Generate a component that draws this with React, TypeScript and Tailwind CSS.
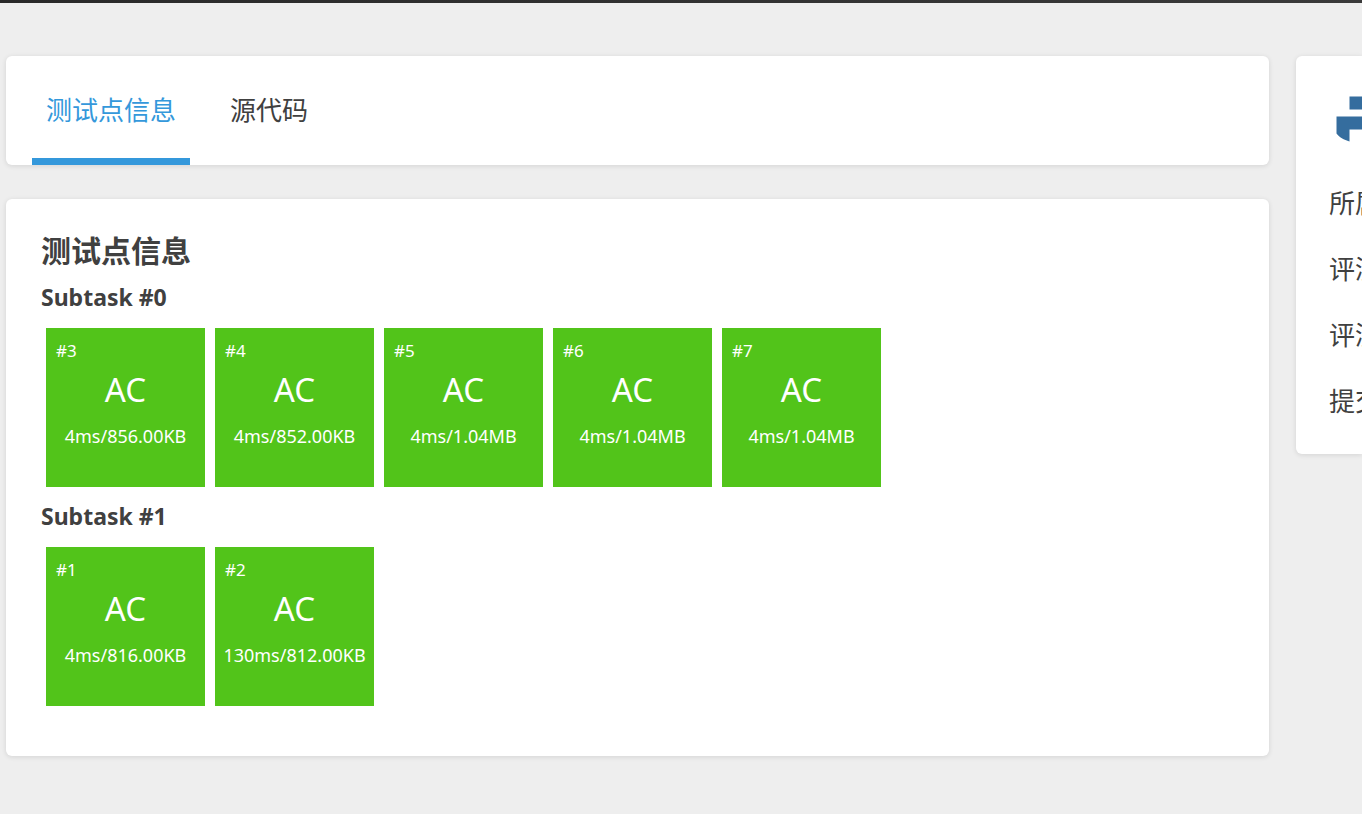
import React, { useState } from 'react';

const tabs = ['测试点信息', '源代码'];

const subtasks = [
  {
    id: 0,
    cases: [
      { id: 3, status: 'AC', usage: '4ms/856.00KB' },
      { id: 4, status: 'AC', usage: '4ms/852.00KB' },
      { id: 5, status: 'AC', usage: '4ms/1.04MB' },
      { id: 6, status: 'AC', usage: '4ms/1.04MB' },
      { id: 7, status: 'AC', usage: '4ms/1.04MB' }
    ]
  },
  {
    id: 1,
    cases: [
      { id: 1, status: 'AC', usage: '4ms/816.00KB' },
      { id: 2, status: 'AC', usage: '130ms/812.00KB' }
    ]
  }
];

const infoLabels = ['所属', '评测', '评测', '提交'];

type Case = { id: number; status: string; usage: string };

const TestCase = ({ item }: { item: Case }) => (
  <div className="size-[159px] bg-[#52c41a] pt-[10px] text-white whitespace-nowrap">
    <div className="px-[10px] text-[17px] leading-[26px]">#{item.id}</div>
    <div className="text-center text-[33px] leading-[52px]">{item.status}</div>
    <div className="text-center text-[18px] leading-[40px]">{item.usage}</div>
  </div>
);

const Logo = () => (
  <svg className="h-[46px] w-[54px] max-w-none" viewBox="0 0 54 46" fill="#356d9e" aria-hidden="true">
    <path d="M13.5 0.5H54V13.5H13.5Z" />
    <path d="M0.5 20.5H54V33.5H13.5V45.5C8 44 3 41 0.5 37.5Z" />
  </svg>
);

const App = () => {
  const [activeTab, setActiveTab] = useState(0);

  return (
    <div className="min-h-screen bg-[#eeeeee] text-[#404040] font-['Noto_Sans','Noto_Sans_CJK_SC',sans-serif]">
      <div className="h-[3px] bg-linear-to-r from-[#292929] to-[#3a3a3a]" />
      <div className="flex items-start gap-[27px] pl-[6px] pt-[53px]">
        <main className="flex min-w-0 flex-1 flex-col gap-[34px]">
          <nav className="flex gap-[26px] rounded-md bg-white px-[26px] shadow-[0_1px_5px_rgba(26,26,26,0.12)]">
            {tabs.map((tab, index) => (
              <button
                key={tab}
                onClick={() => setActiveTab(index)}
                className={`h-[109px] border-b-[7px] px-[14px] pt-[7px] text-[26px] ${
                  activeTab === index
                    ? 'border-[#3498db] text-[#3498db]'
                    : 'border-transparent'
                }`}
              >
                {tab}
              </button>
            ))}
          </nav>

          <section className="rounded-md bg-white px-[35px] pt-[35px] pb-[50px] shadow-[0_1px_5px_rgba(26,26,26,0.12)]">
            <h2 className="text-[30px] leading-[34px] font-bold">测试点信息</h2>
            {subtasks.map((subtask) => (
              <div key={subtask.id}>
                <h3 className="pt-[11px] pb-[13px] text-[23px] leading-[36px] font-bold">Subtask #{subtask.id}</h3>
                <div className="flex flex-wrap gap-[10px] px-[5px]">
                  {subtask.cases.map((item) => (
                    <TestCase key={item.id} item={item} />
                  ))}
                </div>
              </div>
            ))}
          </section>
        </main>

        <aside className="w-[66px] shrink-0 overflow-hidden rounded-l-md bg-white pt-[40px] pb-[20px] pl-[33px] shadow-[0_1px_5px_rgba(26,26,26,0.12)]">
          <div className="mb-[28px] pl-[7px]">
            <Logo />
          </div>
          {infoLabels.map((label, index) => (
            <div key={index} className="text-[26px] leading-[66px] whitespace-nowrap">
              {label}
            </div>
          ))}
        </aside>
      </div>
    </div>
  );
};

export default App;
